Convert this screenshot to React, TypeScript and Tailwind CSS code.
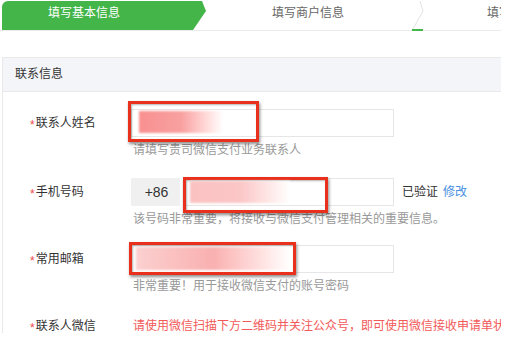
function Star() {
  return <span className="inline-block translate-y-[2px] text-[#f0484c] mr-[1px]">*</span>;
}

export default function App() {
  return (
    <div className="w-[511px] h-[352px] bg-white font-['Liberation_Sans','Noto_Sans_CJK_SC',sans-serif] text-[12px] text-[#333]">
      <div className="w-[501px] h-[333px] overflow-hidden">
        {/* steps */}
        <div className="flex items-start h-[31px] pt-[1px] border-b border-[#ebebeb]">
          <div className="ml-[2px] w-[204px] h-[29px] shrink-0 bg-[#44b549] rounded-tl-[6px] [clip-path:polygon(0_0,200px_0,204px_10px,191px_100%,0_100%)] text-white pl-[46px] pt-[4px] leading-[16px]">
            填写基本信息
          </div>
          <div className="ml-[66px] w-[72px] shrink-0 pt-[4px] leading-[16px] text-[#666]">填写商户信息</div>
          <svg className="ml-[68px] -mt-[1px] shrink-0" width="12" height="31" viewBox="0 0 12 31">
            <polyline points="8,1 11,11 1,29" fill="none" stroke="#e3e3e3" strokeWidth="1" />
            <rect x="0" y="29" width="11" height="2" fill="#44b549" />
          </svg>
          <div className="ml-[63px] shrink-0 pt-[4px] leading-[16px] text-[#666] whitespace-nowrap">填写联系</div>
        </div>

        {/* section */}
        <div className="mt-[26px] ml-[2px] h-[400px] border border-r-0 border-[#e9e9e9]">
          <div className="h-[34px] bg-[#f4f5f9] border-b border-[#e9e9e9] pl-[12px] leading-[33px]">联系信息</div>

          {/* name */}
          <div className="flex mt-[17px]">
            <div className="w-[128px] shrink-0 pl-[27px] leading-[28px]">
              <Star />联系人姓名
            </div>
            <div>
              <div className="relative w-[263px] h-[28px] border border-[#e6e6e6]">
                <div className="absolute left-[-4px] top-[-9px] w-[131px] h-[41px] border-[3px] border-[#e8301c] shadow-[1px_2px_3px_rgba(0,0,0,0.45),inset_1px_1px_2px_rgba(0,0,0,0.3)]">
                  <div className="absolute left-[8px] top-[7px] w-[84px] h-[22px] bg-gradient-to-r from-[#f99090] via-[#f8a0a0] to-white blur-[1px]" />
                </div>
              </div>
              <div className="mt-[5px] pl-[2px] leading-[16px] text-[#999]">请填写贵司微信支付业务联系人</div>
            </div>
          </div>

          {/* phone */}
          <div className="flex mt-[20px]">
            <div className="w-[128px] shrink-0 pl-[27px] leading-[28px]">
              <Star />手机号码
            </div>
            <div>
              <div className="flex items-center">
                <div className="w-[49px] h-[28px] bg-[#f0f0f0] text-[14px] leading-[28px] text-center text-[#333] pl-[2px]">+86</div>
                <div className="relative ml-[3px] w-[211px] h-[28px] border border-[#e6e6e6]">
                  <div className="absolute left-[-1px] top-[-2px] w-[145px] h-[36px] border-[3px] border-[#e8301c] shadow-[1px_2px_3px_rgba(0,0,0,0.45),inset_1px_1px_2px_rgba(0,0,0,0.3)]">
                    <div className="absolute left-[4px] top-[1px] w-[100px] h-[22px] bg-gradient-to-r from-[#fbc2c2] via-[#fbc6c6] to-white blur-[1px]" />
                  </div>
                </div>
                <span className="ml-[8px]">已验证</span>
                <span className="ml-[5px] text-[#4a8fdf]">修改</span>
              </div>
              <div className="mt-[5px] pl-[2px] leading-[16px] text-[#999] whitespace-nowrap">该号码非常重要，将接收与微信支付管理相关的重要信息。</div>
            </div>
          </div>

          {/* email */}
          <div className="flex mt-[18px]">
            <div className="w-[128px] shrink-0 pl-[27px] leading-[28px]">
              <Star />常用邮箱
            </div>
            <div>
              <div className="relative w-[263px] h-[28px] border border-[#e6e6e6]">
                <div className="absolute left-[-3px] top-[-4px] w-[167px] h-[33px] border-[3px] border-[#e8301c] shadow-[1px_2px_3px_rgba(0,0,0,0.45),inset_1px_1px_2px_rgba(0,0,0,0.3)]">
                  <div className="absolute left-[4px] top-[2px] w-[154px] h-[23px] bg-gradient-to-r from-[#fcd0d0] via-[#f9b0b0] to-white blur-[1px]" />
                </div>
              </div>
              <div className="mt-[5px] pl-[2px] leading-[16px] text-[#999]">非常重要！用于接收微信支付的账号密码</div>
            </div>
          </div>

          {/* wechat */}
          <div className="flex mt-[18px]">
            <div className="w-[128px] shrink-0 pl-[27px] leading-[28px]">
              <Star />联系人微信
            </div>
            <div className="pl-[2px] leading-[28px] text-[#f25a5a] whitespace-nowrap">
              请使用微信扫描下方二维码并关注公众号，即可使用微信接收申请单状态通知
            </div>
          </div>
        </div>
      </div>
    </div>
  );
}
